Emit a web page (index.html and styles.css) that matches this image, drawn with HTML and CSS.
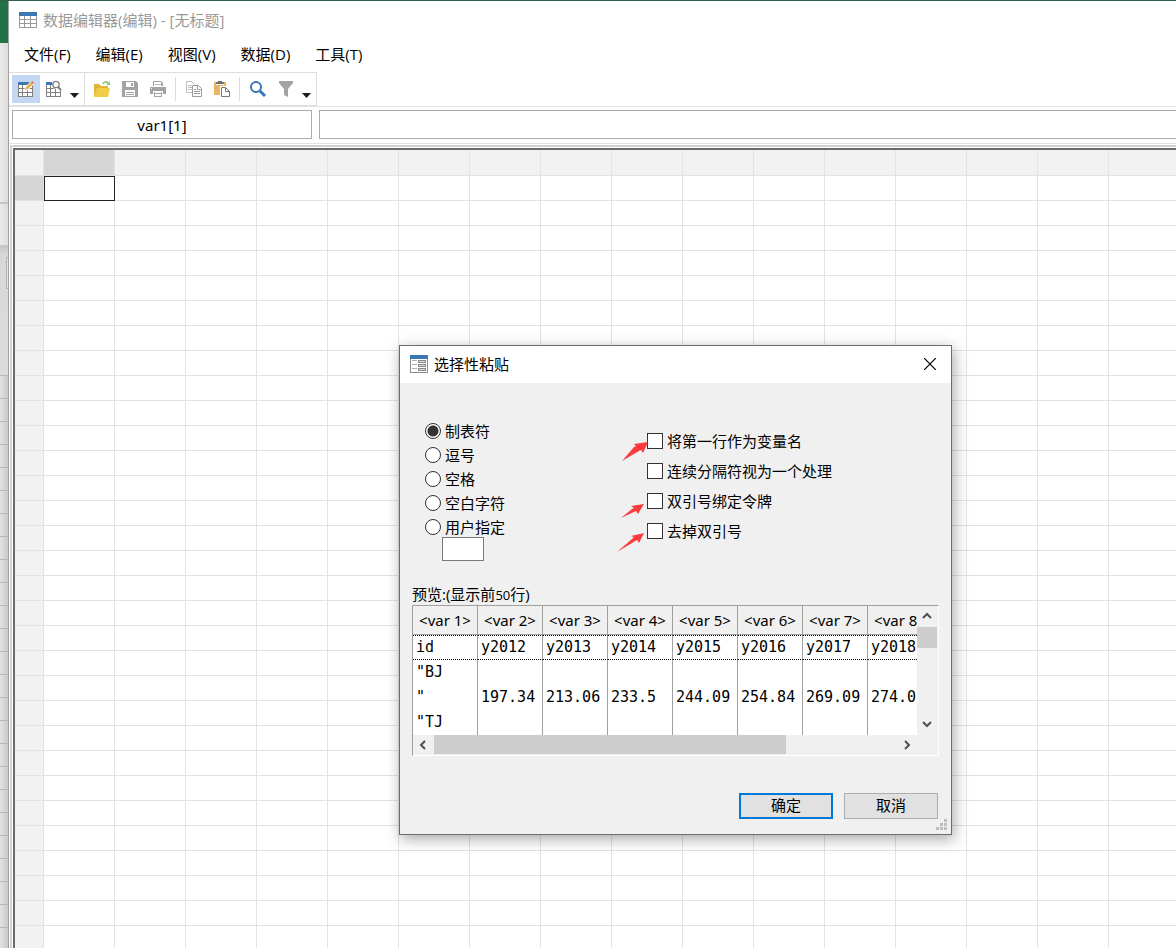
FILE: index.html
```html
<!DOCTYPE html>
<html lang="zh-CN">
<head>
<meta charset="utf-8">
<title>数据编辑器(编辑) - [无标题]</title>
<link rel="stylesheet" href="styles.css">
</head>
<body>
<div class="desktop">
  <aside class="behind" aria-hidden="true">
    <div class="behind-title"></div>
    <div class="behind-ribbon"></div>
    <div class="behind-tools"></div>
    <div class="behind-bar"><div class="behind-box"></div></div>
    <div class="behind-rows"></div>
  </aside>

  <main class="window">
    <header class="titlebar">
      <svg class="title-icon" viewBox="0 0 18 16" width="18" height="16">
        <path d="M0 0h18v16H0z" fill="#9a9a9a"/><path d="M0 0h18v4H0z" fill="#3b76b5"/>
        <path d="M1 4h4v3H1zM6 4h5v3H6zM12 4h5v3h-5zM1 8h4v3H1zM6 8h5v3H6zM12 8h5v3h-5zM1 12h4v3H1zM6 12h5v3H6zM12 12h5v3h-5z" fill="#fff"/>
      </svg>
      <h1>数据编辑器(编辑) - [无标题]</h1>
    </header>

    <nav class="menubar">
      <button type="button">文件(F)</button>
      <button type="button">编辑(E)</button>
      <button type="button">视图(V)</button>
      <button type="button">数据(D)</button>
      <button type="button">工具(T)</button>
    </nav>

    <div class="toolbar">
      <div class="tool-group">
        <button type="button" class="tool active" aria-label="编辑模式">
          <svg viewBox="0 0 18 18" width="18" height="18">
            <path d="M1 2h15v15H1z" fill="#808080"/><path d="M1 2h15v3H1z" fill="#3b76b5"/>
            <path d="M2 5h3v3H2zM6 5h4v3H6zM11 5h4v3h-4zM2 9h3v3H2zM6 9h4v3H6zM11 9h4v3h-4zM2 13h3v3H2zM6 13h4v3H6zM11 13h4v3h-4z" fill="#fff"/>
            <path d="M7 11l1-4 6-6 3 3-6 6z" fill="#fff"/>
            <path d="M8 10l1-3 5-5 2 2-5 5z" fill="#e9ae52"/><path d="M14 2l1-1 2 2-1 1z" fill="#df5b5b"/>
          </svg>
        </button>
        <button type="button" class="tool" aria-label="浏览模式">
          <svg viewBox="0 0 18 18" width="18" height="18">
            <path d="M1 2h15v15H1z" fill="#808080"/><path d="M1 2h15v3H1z" fill="#3b76b5"/>
            <path d="M2 5h3v3H2zM6 5h4v3H6zM11 5h4v3h-4zM2 9h3v3H2zM6 9h4v3H6zM11 9h4v3h-4zM2 13h3v3H2zM6 13h4v3H6zM11 13h4v3h-4z" fill="#fff"/>
            <path d="M7 1h10v9h-3L8 8z" fill="#fff"/>
            <circle cx="11" cy="4.500" r="3.200" fill="#fff" stroke="#808080" stroke-width="1.300"/><path d="M13 7l3 3" stroke="#808080" stroke-width="2"/>
          </svg>
        </button>
        <button type="button" class="drop" aria-label="更多"><svg viewBox="0 0 9 5" width="9" height="5"><path d="M0 0h9L4.500 5z" fill="#1e1e1e"/></svg></button>
      </div>
      <div class="tool-group">
        <button type="button" class="tool" aria-label="打开">
          <svg viewBox="0 0 18 18" width="18" height="18">
            <path d="M1 4h5l2 2h7v11H1z" fill="#e2b530"/><path d="M4 8h13l-2 9H1z" fill="#efcd48"/>
            <path d="M10 4c1-2 3-3 5-1" fill="none" stroke="#8cc474" stroke-width="1.600"/><path d="M17 1v4h-4z" fill="#8cc474"/>
          </svg>
        </button>
        <button type="button" class="tool" aria-label="保存">
          <svg viewBox="0 0 18 18" width="18" height="18">
            <path d="M1 1h14l2 2v14H1z" fill="#a3a3a3"/><path d="M5 2h8v5H5zM4 10h10v6H4z" fill="#fff"/><path d="M10 3h2v3h-2zM5 12h8v1H5zM5 14h8v1H5z" fill="#a3a3a3"/>
          </svg>
        </button>
        <button type="button" class="tool" aria-label="打印">
          <svg viewBox="0 0 18 18" width="18" height="18">
            <path d="M4 1h8l2 2v3H4z" fill="#a3a3a3"/><path d="M5 2h7v4H5z" fill="#fff"/><path d="M6 4h6v1H6z" fill="#bbb"/>
            <path d="M1 7h16v7H1z" fill="#a3a3a3"/><path d="M2 8h1v1H2z" fill="#fff"/><path d="M4 10h10v7H4z" fill="#fff"/><path d="M4 10h10v1H4zM5 12h8v5H5z" fill="#a3a3a3"/><path d="M6 12h6v1H6zM6 14h6v2H6z" fill="#fff"/>
          </svg>
        </button>
        <span class="sep"></span>
        <button type="button" class="tool" aria-label="复制">
          <svg viewBox="0 0 18 18" width="18" height="18" fill="#fff" stroke="#bdbdbd">
            <path d="M1.500 1.500h5l3 3v8h-8z"/><path d="M3 5.500h4M3 7.500h4M3 9.500h4"/>
            <path d="M7.500 5.500h6l3 3v8h-9z" stroke="#9c9c9c"/><path d="M12.500 6v3.500h4M9 9.500h2M9 11.500h6M9 13.500h6" stroke="#9c9c9c"/>
          </svg>
        </button>
        <button type="button" class="tool" aria-label="粘贴">
          <svg viewBox="0 0 18 18" width="18" height="18">
            <path d="M1 2h12v13H1z" fill="#e7b562"/><path d="M3 2h8v3H3z" fill="#fff"/><path d="M5 1h4v1h2v2H3V2h2z" fill="#707070"/>
            <path d="M8.500 7.500h4l4 4v5h-8z" fill="#fff" stroke="#fff" stroke-width="3"/><path d="M8.500 7.500h4l4 4v5h-8z" fill="#fff" stroke="#777"/><path d="M12.500 8v3.500h4" fill="none" stroke="#777"/>
          </svg>
        </button>
        <span class="sep"></span>
        <button type="button" class="tool" aria-label="查找">
          <svg viewBox="0 0 18 18" width="18" height="18" fill="none" stroke="#3b76b5"><circle cx="7" cy="7" r="5" stroke-width="2"/><path d="M11 11l5 5" stroke-width="3"/></svg>
        </button>
        <button type="button" class="tool" aria-label="筛选">
          <svg viewBox="0 0 18 18" width="18" height="18"><path d="M2 1h14v2l-5 6v8l-4-2V9L2 3z" fill="#a3a3a3"/></svg>
        </button>
        <button type="button" class="drop" aria-label="更多"><svg viewBox="0 0 9 5" width="9" height="5"><path d="M0 0h9L4.500 5z" fill="#1e1e1e"/></svg></button>
      </div>
    </div>

    <div class="cellbar">
      <input class="cell-name" type="text" value="var1[1]" aria-label="单元格" readonly>
      <input class="cell-value" type="text" aria-label="值">
    </div>

    <div class="sheet"><table class="grid" id="grid" aria-label="数据"></table></div>
  </main>

  <section class="dialog" role="dialog" aria-labelledby="dialog-title">
    <header class="dialog-head">
      <svg viewBox="0 0 18 18" width="18" height="18">
        <path d="M0 0h18v18H0z" fill="#8c8c8c"/><path d="M1 4h16v13H1z" fill="#fff"/><path d="M0 0h18v4H0z" fill="#3b76b5"/>
        <path d="M2 5h5v1H2zM2 9h5v1H2zM2 13h5v1H2z" fill="#b0b0b0"/>
        <path d="M8 5h8v3H8zM8 9h8v3H8zM8 13h8v3H8z" fill="#888"/><path d="M9 6h6v1H9zM9 10h6v1H9zM9 14h6v1H9z" fill="#ddd"/>
      </svg>
      <h2 id="dialog-title">选择性粘贴</h2>
      <button type="button" class="close" aria-label="关闭"><svg viewBox="0 0 12 12" width="12" height="12"><path d="M0 0l12 12M12 0L0 12" stroke="#000" stroke-width="1.200"/></svg></button>
    </header>
    <div class="dialog-body">
      <div class="options">
        <div class="delimiters">
          <label><input type="radio" name="delimiter" checked>制表符</label>
          <label><input type="radio" name="delimiter">逗号</label>
          <label><input type="radio" name="delimiter">空格</label>
          <label><input type="radio" name="delimiter">空白字符</label>
          <label><input type="radio" name="delimiter">用户指定</label>
          <input class="custom" type="text" aria-label="用户指定分隔符">
        </div>
        <div class="flags">
          <label><input type="checkbox">将第一行作为变量名</label>
          <label><input type="checkbox">连续分隔符视为一个处理</label>
          <label><input type="checkbox">双引号绑定令牌</label>
          <label><input type="checkbox">去掉双引号</label>
          <svg class="arrows" viewBox="0 0 34 114" width="34" height="114" fill="#fb3b3b">
            <path d="M5 23L17 9 19 8 17 6 31 4 26 15 24 12 22 13Z"/>
            <path d="M4 80L15 71 17 70 14 68 27 66 21 76 19 73Z"/>
            <path d="M0 114L15 101 17 99 14 98 27 95 22 105 20 102Z"/>
          </svg>
        </div>
      </div>

      <p class="preview-label">预览:(显示前<small>50</small>行)</p>
      <div class="preview">
        <div class="preview-view">
          <table>
            <thead><tr><th>&lt;var 1&gt;</th><th>&lt;var 2&gt;</th><th>&lt;var 3&gt;</th><th>&lt;var 4&gt;</th><th>&lt;var 5&gt;</th><th>&lt;var 6&gt;</th><th>&lt;var 7&gt;</th><th>&lt;var 8&gt;</th></tr></thead>
            <tbody>
              <tr class="focused"><td>id</td><td>y2012</td><td>y2013</td><td>y2014</td><td>y2015</td><td>y2016</td><td>y2017</td><td>y2018</td></tr>
              <tr><td>"BJ</td><td></td><td></td><td></td><td></td><td></td><td></td><td></td></tr>
              <tr><td>"</td><td>197.34</td><td>213.06</td><td>233.5</td><td>244.09</td><td>254.84</td><td>269.09</td><td>274.0</td></tr>
              <tr><td>"TJ</td><td></td><td></td><td></td><td></td><td></td><td></td><td></td></tr>
            </tbody>
          </table>
        </div>
        <div class="vscroll">
          <button type="button" aria-label="向上"><svg viewBox="0 0 10 8" width="10" height="8"><path d="M1 6l4-4 4 4"/></svg></button>
          <div class="vthumb"></div>
          <button type="button" class="down" aria-label="向下"><svg viewBox="0 0 10 8" width="10" height="8"><path d="M1 2l4 4 4-4"/></svg></button>
        </div>
        <div class="hscroll">
          <button type="button" aria-label="向左"><svg viewBox="0 0 8 10" width="8" height="10"><path d="M6 1L2 5l4 4"/></svg></button>
          <div class="htrack"><div class="hthumb"></div></div>
          <button type="button" aria-label="向右"><svg viewBox="0 0 8 10" width="8" height="10"><path d="M2 1l4 4-4 4"/></svg></button>
        </div>
      </div>

      <div class="actions">
        <button type="button" class="primary">确定</button>
        <button type="button">取消</button>
      </div>
    </div>
    <svg class="grip" viewBox="0 0 11 11" width="11" height="11" fill="#bdbdbd"><path d="M8 0h3v3H8zM4 4h3v3H4zM8 4h3v3H8zM0 8h3v3H0zM4 8h3v3H4zM8 8h3v3H8z"/></svg>
  </section>
</div>
<script src="grid.js"></script>
</body>
</html>
```
FILE: styles.css
```css
* { box-sizing: border-box; }

body {
  margin: 0;
  color: #000;
  font: 15px/20px "Open Sans", "Noto Sans CJK SC", sans-serif;
}

button, input { font: inherit; color: inherit; margin: 0; }
button { border: 0; padding: 0; background: none; }
svg { display: block; flex: none; }

.desktop {
  position: relative;
  display: flex;
  height: 100vh;
  overflow: hidden;
  border-top: 1px solid #2f6247;
}

.behind {
  display: flex;
  flex-direction: column;
  flex: none;
  width: 9px;
  border-right: 1px solid #a0a0a0;
  background: #ebeae8;
}
.behind-title { height: 42px; background: #217346; }
.behind-ribbon { height: 161px; border-bottom: 2px solid #c4c4c4; background: linear-gradient(90deg, #ecebe9, #dddcda); }
.behind-tools { height: 41px; background: linear-gradient(90deg, #ecebe9, #dddcda); }
.behind-bar { height: 130px; padding: 12px 0 0 6px; background: linear-gradient(#c4c4c4, #d8d8d8 10px, #dcdcdc); }
.behind-box { height: 32px; border: 1px solid #b4b4b4; border-right: 0; background: #e2e2e2; }
.behind-rows {
  flex: 1;
  background: repeating-linear-gradient(#b8b8b8 0 1px, transparent 1px 23px), linear-gradient(90deg, #e2e2e2, #c8c8c8);
}

.window { display: flex; flex-direction: column; flex: 1; min-width: 0; background: #fff; }

.titlebar { display: flex; align-items: center; gap: 6px; height: 37px; padding-left: 10px; }
h1, h2 { margin: 0; font-size: 15px; font-weight: 400; }
h1 { color: #999; }

.menubar { display: flex; gap: 1px; height: 34px; padding: 0 0 2px 3px; }
.menubar button { padding: 0 12px; }

.toolbar { display: flex; border-bottom: 1px solid #e2e2e2; }
.tool-group {
  display: flex;
  align-items: center;
  height: 34px;
  padding: 0 4px 0 3px;
  border: 1px solid #dedede;
  border-left: 0;
}
.tool { display: grid; place-items: center; width: 28px; height: 28px; }
.tool.active { background: #c3d6f2; }
.drop { display: grid; place-items: end center; width: 12px; height: 28px; padding-bottom: 5px; }
.sep { width: 1px; height: 24px; margin: 0 4px 0 3px; background: #dcdcdc; }

.cellbar { display: flex; gap: 7px; padding: 3px 0 4px 3px; border-bottom: 1px solid #e2e2e2; }
.cellbar input { height: 29px; border: 1px solid #ababab; background: #fff; outline: 0; }
.cell-name { width: 300px; text-align: center; font-family: "Noto Sans", sans-serif; }
.cellbar .cell-value { flex: 1; min-width: 0; border-right: 0; }

.sheet {
  flex: 1;
  min-height: 0;
  margin: 1px 0 0 1px;
  border: solid #d2d2d2;
  border-width: 2px 0 0 2px;
  padding: 1px 0 0 1px;
  overflow: hidden;
}
.grid {
  table-layout: fixed;
  width: 2871px;
  border-collapse: separate;
  border-spacing: 0;
  border: solid #6b6b6b;
  border-width: 2px 0 0 2px;
}
.grid th, .grid td { height: 25px; padding: 0; border: solid #e3e3e3; border-width: 0 1px 1px 0; }
.grid tr:first-child th { height: 26px; }
.grid th { background: #f2f2f2; }
.grid .corner { width: 29px; }
.grid .current { background: #d6d6d6; }
.grid .selected { outline: 1px solid #222; outline-offset: -1px; border-color: transparent; }

.dialog {
  position: absolute;
  left: 399px;
  top: 344px;
  width: 553px;
  border: 1px solid #6c6c6c;
  background: #f0f0f0;
  box-shadow: 2px 4px 14px rgba(0, 0, 0, 0.35);
}
.dialog-head { display: flex; align-items: center; gap: 6px; height: 37px; padding: 0 15px 2px 10px; background: #fff; }
.close { margin-left: auto; }
.dialog-body { padding: 36px 12px 15px; }

.options { display: flex; gap: 105px; padding-left: 13px; }
.delimiters { display: flex; flex-direction: column; width: 117px; }
.options label { display: flex; align-items: center; gap: 4px; height: 24px; line-height: 18px; white-space: nowrap; }
.options .flags label { height: 30px; }
.flags { position: relative; padding-top: 7px; }
.options label input { appearance: none; width: 16px; height: 16px; border: 1px solid #333; background: #fff; }
.options input[type="radio"] { border-radius: 50%; }
.options input[type="radio"]:checked { background: radial-gradient(circle, #333 5px, #fff 6px); }
.custom { width: 42px; height: 24px; margin: -2px 0 0 17px; border: 1px solid #7a7a7a; background: #fff; }
.arrows { position: absolute; left: -30px; top: 19px; }

.preview-label { margin: 23px 0 0; line-height: 20px; }
.preview-label small { font-size: 13px; }

.preview {
  display: grid;
  grid-template-columns: 1fr 21px;
  grid-template-rows: 129px 20px;
  border: 1px solid #fff;
  border-left-color: #a0a0a0;
  border-top-color: #a0a0a0;
}
.preview-view { overflow: hidden; background: #fff; }
.preview table { table-layout: fixed; width: 520px; border-collapse: separate; border-spacing: 0; }
.preview th, .preview td { width: 65px; padding: 0; border-right: 1px solid #a0a0a0; white-space: nowrap; }
.preview th {
  height: 29px;
  padding-bottom: 1px;
  border-bottom: 1px solid #a0a0a0;
  background: #f0f0f0;
  font: 15px/20px "Noto Sans", sans-serif;
}
.preview td { height: 25px; padding: 0 0 2px 3px; font: 15px/20px "DejaVu Sans Mono", monospace; }
.preview .focused td { border-top: 1px dotted #000; border-bottom: 1px dotted #000; }

.vscroll { display: flex; flex-direction: column; padding-right: 1px; }
.vscroll button, .hscroll button { display: grid; place-items: center; width: 20px; height: 20px; }
.vscroll svg, .hscroll svg { fill: none; stroke: #505050; stroke-width: 2; }
.vthumb { height: 21px; margin-top: 1px; background: #cdcdcd; }
.vscroll .down { margin: auto 0 1px; }
.hscroll { display: flex; }
.htrack { flex: 1; padding-left: 1px; }
.hthumb { width: 76%; height: 19px; background: #cdcdcd; }

.actions { display: flex; justify-content: flex-end; gap: 11px; margin-top: 37px; padding-right: 1px; }
.actions button { width: 94px; height: 26px; padding-bottom: 2px; border: 1px solid #adadad; background: #e1e1e1; }
.actions .primary { border: 2px solid #0078d7; }
.grip { position: absolute; right: 4px; bottom: 4px; }
```
FILE: grid.js
```js
const grid = document.getElementById("grid");
const ROWS = 48;
const COLUMNS = 40;

for (let r = 0; r <= ROWS; r++) {
  const row = grid.insertRow();
  for (let c = 0; c <= COLUMNS; c++) {
    const isHeader = r === 0 || c === 0;
    const cell = document.createElement(isHeader ? "th" : "td");
    if (r === 0 && c === 0) cell.className = "corner";
    else if (isHeader && r + c === 1) cell.className = "current";
    else if (r === 1 && c === 1) cell.className = "selected";
    row.appendChild(cell);
  }
}
```
